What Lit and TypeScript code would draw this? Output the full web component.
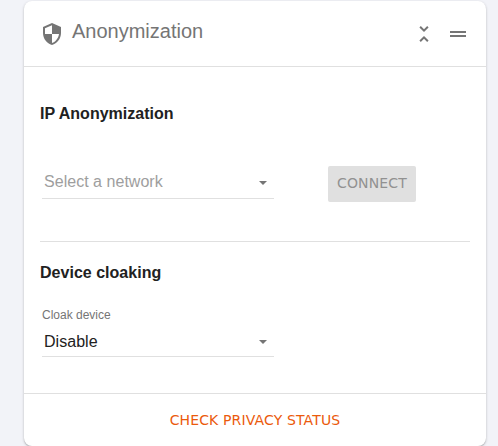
import { LitElement, html, css, svg } from "lit";
import { customElement, property } from "lit/decorators.js";

const ICONS = {
  security:
    "M12 1L3 5v6c0 5.55 3.84 10.74 9 12 5.16-1.26 9-6.45 9-12V5l-9-4zm0 10.99h7c-.53 4.12-3.28 7.79-7 8.94V12H5V6.3l7-3.11v8.8z",
  collapse:
    "M7.41 18.59L8.83 20 12 16.83 15.17 20l1.41-1.41L12 14l-4.59 4.59zm9.18-13.18L15.17 4 12 7.17 8.83 4 7.41 5.41 12 10l4.59-4.59z",
  drag: "M20 9H4v2h16V9zM4 15h16v-2H4v2z",
};

const icon = (d: string) =>
  html`<svg class="icon" viewBox="0 0 24 24">${svg`<path d=${d}></path>`}</svg>`;

@customElement("select-field")
class SelectField extends LitElement {
  @property() label = "";
  @property() value = "";
  @property() placeholder = "";

  static styles = css`
    :host {
      display: block;
      width: 232px;
    }
    .label {
      height: 16px;
      line-height: 16px;
      font-size: 12px;
      color: #757575;
    }
    .box {
      display: flex;
      align-items: center;
      height: 33px;
      padding: 0 7px 0 2px;
      border-bottom: 1px solid #e0e0e0;
    }
    .text {
      flex: 1;
      font-size: 16px;
      line-height: 24px;
      letter-spacing: 0.03px;
      color: #212121;
    }
    .placeholder {
      color: #9e9e9e;
    }
    .arrow {
      width: 0;
      height: 0;
      margin-top: 2px;
      border: 4px solid transparent;
      border-top-color: #757575;
      border-bottom: 0;
    }
    .labelled {
      box-sizing: border-box;
      height: 34px;
      padding-top: 5px;
    }
    .labelled .arrow {
      margin-top: 0;
    }
  `;

  render() {
    return html`
      <div class="label">${this.label}</div>
      <div class="box ${this.label ? "labelled" : ""}">
        <span class="text ${this.value ? "" : "placeholder"}">${this.value || this.placeholder}</span>
        <span class="arrow"></span>
      </div>
    `;
  }
}

@customElement("app-root")
class AppRoot extends LitElement {
  static styles = css`
    :host {
      display: block;
      box-sizing: border-box;
      height: 446px;
      padding: 1px 12px 0 24px;
      overflow: hidden;
      background: #f2f3f8;
      font-family: "Liberation Sans", Arial, sans-serif;
      color: #212121;
    }
    .card {
      box-sizing: border-box;
      height: 445px;
      display: flex;
      flex-direction: column;
      background: #fff;
      border-radius: 8px;
      box-shadow: 0 1px 3px rgba(0, 0, 0, 0.2), 0 1px 1px rgba(0, 0, 0, 0.14);
    }
    .header {
      display: flex;
      align-items: flex-start;
      height: 66px;
      box-sizing: border-box;
      padding: 21px 16px 0;
      border-bottom: 1px solid #e0e0e0;
    }
    .icon {
      display: block;
      width: 24px;
      height: 24px;
      fill: #757575;
    }
    .title {
      flex: 1;
      margin: -5px 0 0 8px;
      font-size: 20px;
      line-height: 28px;
      font-weight: 400;
      color: #757575;
    }
    .tools {
      display: flex;
      gap: 10px;
    }
    .body {
      flex: 1;
      padding: 0 16px;
    }
    .section {
      box-sizing: border-box;
    }
    .first {
      height: 175px;
      padding-top: 35px;
      border-bottom: 1px solid #e0e0e0;
    }
    .second {
      padding-top: 19px;
    }
    h2 {
      margin: 0;
      font-size: 16px;
      line-height: 24px;
      font-weight: 700;
      letter-spacing: 0.02px;
    }
    .row {
      display: flex;
      align-items: flex-end;
      gap: 54px;
      padding: 23px 0 0 2px;
    }
    .second .row {
      padding-top: 22px;
    }
    .connect {
      width: 88px;
      height: 36px;
      margin-bottom: -3px;
      padding: 0 0 2px;
      border: 0;
      border-radius: 2px;
      background: #e0e0e0;
      color: #919191;
      font: 14px "DejaVu Sans", sans-serif;
      letter-spacing: 0.14px;
    }
    .footer {
      height: 53px;
      box-sizing: border-box;
      display: flex;
      align-items: center;
      justify-content: center;
      border-top: 1px solid #e0e0e0;
    }
    .check {
      padding: 0;
      border: 0;
      background: none;
      color: #eb5a0c;
      font: 14px "DejaVu Sans", sans-serif;
      letter-spacing: 0.14px;
    }
  `;

  render() {
    return html`
      <div class="card">
        <div class="header">
          ${icon(ICONS.security)}
          <h1 class="title">Anonymization</h1>
          <div class="tools">${icon(ICONS.collapse)}${icon(ICONS.drag)}</div>
        </div>
        <div class="body">
          <div class="section first">
            <h2>IP Anonymization</h2>
            <div class="row">
              <select-field placeholder="Select a network"></select-field>
              <button class="connect" disabled>CONNECT</button>
            </div>
          </div>
          <div class="section second">
            <h2>Device cloaking</h2>
            <div class="row">
              <select-field label="Cloak device" value="Disable"></select-field>
            </div>
          </div>
        </div>
        <div class="footer"><button class="check">CHECK PRIVACY STATUS</button></div>
      </div>
    `;
  }
}
